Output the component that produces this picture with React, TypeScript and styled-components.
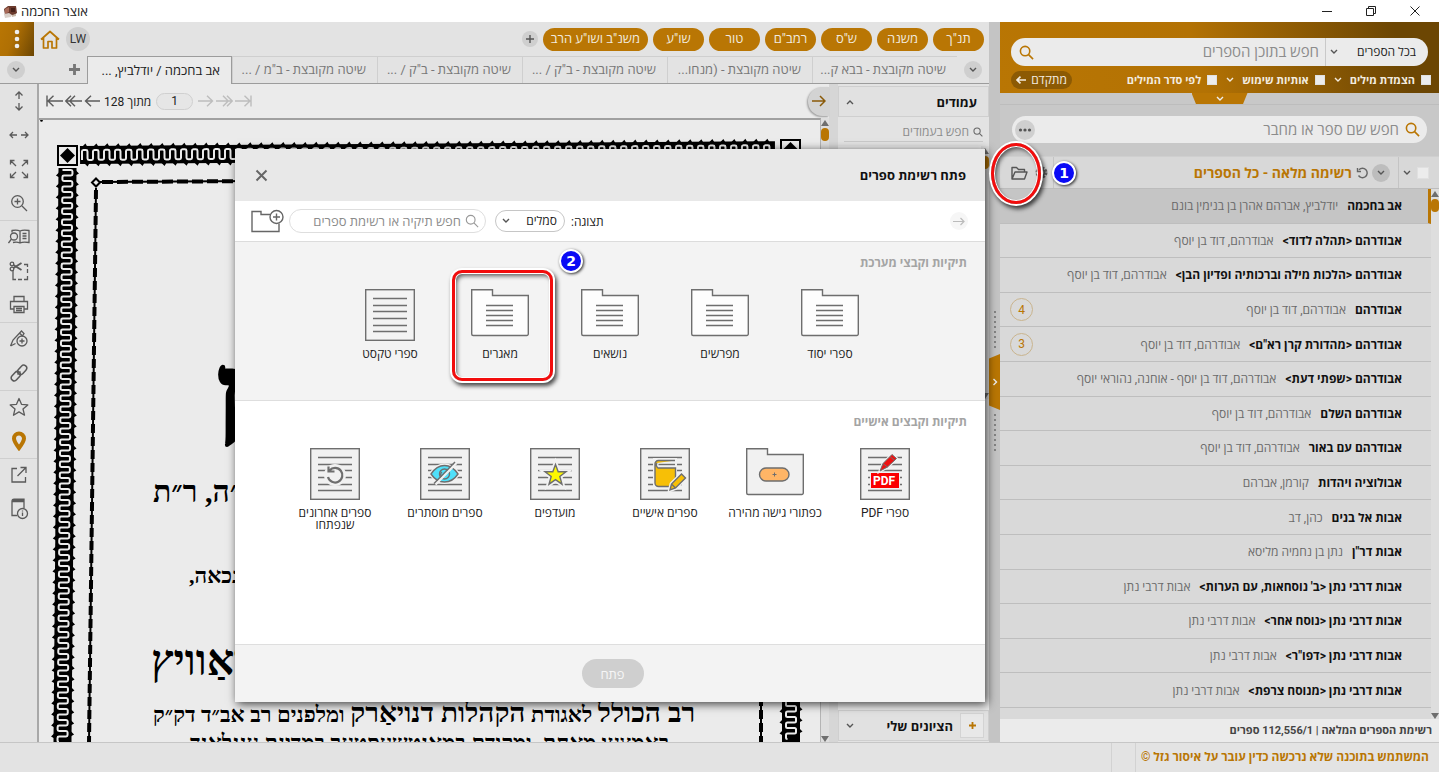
import React from "react";
import styled, { createGlobalStyle, css } from "styled-components";

const ORANGE = "#b97604";
const SANS = 'Roboto, "Open Sans", "Liberation Sans", sans-serif';
const SERIF = '"Liberation Serif", "DejaVu Serif", serif';

const GlobalStyle = createGlobalStyle`
  *, *::before, *::after { box-sizing: border-box; }
  html, body, #root { height: 100%; }
  body { margin: 0; overflow: hidden; font-family: ${SANS}; font-size: 13px; color: #222; background: #e3e3e3; }
  button, input, select { font: inherit; color: inherit; }
  button { padding: 0; border: 0; background: none; cursor: pointer; }
  input::placeholder { color: #8c8c8c; opacity: 1; }
  ul { margin: 0; padding: 0; list-style: none; }
  h1, h2, h3, p { margin: 0; font-size: inherit; font-weight: inherit; }
  svg { display: block; flex: none; }
`;

/* ---------- shell ---------- */

const Shell = styled.div`
  position: relative;
  display: flex;
  flex-direction: column;
  height: 100vh;
  overflow: hidden;
`;

const TitleBar = styled.header`
  display: flex;
  align-items: center;
  gap: 3px;
  height: 22px;
  padding: 0 3px;
  background: #fff;
  direction: ltr;
`;

const WindowTitle = styled.h1`
  flex: 1;
  font: 13px/18px "Open Sans", sans-serif;
  color: #222;
`;

const WindowButton = styled.button`
  display: grid;
  place-items: center;
  width: 44px;
  height: 22px;
`;

const WindowButtons = styled.div`
  display: flex;
  margin-right: -1px;
`;

const Body = styled.div`
  display: flex;
  flex: 1;
  min-height: 0;
`;

const StatusBar = styled.footer`
  display: flex;
  height: 30px;
  border-top: 1px solid #c6c6c6;
  background: #e3e3e3;
`;

const Copyright = styled.p`
  width: 304px;
  padding-right: 10px;
  border-left: 1px solid #d2d2d2;
  font-size: 12px;
  font-weight: 700;
  line-height: 29px;
  white-space: nowrap;
  color: ${ORANGE};
`;

const StatusCell = styled.div`
  width: 24px;
  border-left: 1px solid #d2d2d2;
`;

/* ---------- books panel ---------- */

const BooksPanel = styled.aside`
  display: flex;
  flex-direction: column;
  flex: none;
  width: 439px;
  background: #c8c8c8;
`;

const SearchHeader = styled.div`
  height: 71px;
  padding: 16px 11px 0;
  background: linear-gradient(75deg, #b97604 0%, #b37204 45%, #6c4603 90%);
`;

const SearchBox = styled.div`
  display: flex;
  align-items: center;
  height: 28px;
  padding: 0 12px 0 8px;
  border-radius: 14px;
  background: #ebebeb;
`;

const ScopeSelect = styled.div`
  position: relative;
  width: 91px;
  height: 28px;
  border-left: 1px solid #c9c9c9;

  select {
    width: 100%;
    height: 28px;
    padding: 0;
    border: 0;
    appearance: none;
    background: none;
    font-size: 12px;
  }
  svg { position: absolute; left: 4px; top: 11px; pointer-events: none; }
`;

const BigInput = styled.input`
  flex: 1;
  min-width: 0;
  padding: 0 6px;
  border: 0;
  background: none;
  font-size: 15px;
`;

const OptionsRow = styled.div`
  display: flex;
  align-items: center;
  height: 27px;
  margin-right: -3px;
  color: #f3ece0;
`;

const CheckLabel = styled.label`
  display: flex;
  align-items: center;
  gap: 6px;
  margin-left: 8px;
  font-size: 11px;
  font-weight: 700;
  white-space: nowrap;
`;

const OptionMore = styled.span`
  margin-left: 9px;
`;

const CheckBox = styled.input.attrs({ type: "checkbox" })<{ $size?: number }>`
  flex: none;
  width: ${(p) => p.$size ?? 10}px;
  height: ${(p) => p.$size ?? 10}px;
  margin: 0;
  appearance: none;
  background: #ececec;
  border: 1px solid #e0e0e0;
`;

const AdvancedButton = styled.button`
  display: flex;
  align-items: center;
  justify-content: center;
  gap: 5px;
  width: 61px;
  height: 18px;
  margin-right: auto;
  border-radius: 9px;
  background: #8c5a04;
  font-size: 12px;
`;

const CollapseStrip = styled.div`
  display: flex;
  justify-content: center;
  height: 12px;
  border-bottom: 1px solid #bdbdbd;
`;

const CollapseTab = styled.button`
  display: grid;
  place-items: center;
  width: 56px;
  height: 11px;
  background: ${ORANGE};
  clip-path: polygon(0 0, 100% 0, 92% 100%, 8% 100%);
`;

const NameSearch = styled(SearchBox)`
  height: 27px;
  margin: 11px 12px 13px 12px;
  padding: 0 7px 0 3px;
`;

const RoundButton = styled.button<{ $size: number; $bg?: string }>`
  display: grid;
  flex: none;
  place-items: center;
  width: ${(p) => p.$size}px;
  height: ${(p) => p.$size}px;
  border-radius: 50%;
  background: ${(p) => p.$bg ?? "#cfcfcf"};
`;

const ListHeader = styled.div`
  display: flex;
  align-items: center;
  height: 33px;
  border-top: 1px solid #cfcfcf;
  border-bottom: 1px solid #bcbcbc;
  background: #d8d8d8;
`;

const HeaderSelect = styled.div`
  display: flex;
  align-items: center;
  gap: 6px;
  width: 41px;
  height: 31px;
  padding-right: 10px;
  border-left: 1px solid #c4c4c4;
`;

const HeaderActions = styled.div`
  display: flex;
  align-items: center;
  gap: 4px;
  padding-right: 8px;
`;

const ListTitle = styled.h2`
  flex: 1;
  padding-right: 4px;
  font-size: 14px;
  font-weight: 700;
  color: ${ORANGE};
`;

const HeaderTools = styled.div`
  display: flex;
  align-items: center;
  justify-content: flex-end;
  gap: 7px;
  width: 54px;
  height: 31px;
  padding-left: 11px;
  border-right: 1px solid #c4c4c4;
`;

const ListArea = styled.div`
  display: flex;
  flex: 1;
  min-height: 0;
  background: #d9d9d9;
`;

const BookList = styled.ul`
  display: grid;
  flex: 1;
  grid-auto-rows: 1fr;
  min-width: 0;
  padding-bottom: 11px;
`;

const BookRow = styled.li<{ $selected?: boolean }>`
  display: flex;
  align-items: center;
  gap: 9px;
  min-width: 0;
  padding: 0 29px 0 10px;
  border-bottom: 1px solid #bebebe;
  white-space: nowrap;
  font-size: 12px;
  color: #6a6a6a;
  ${(p) =>
    p.$selected &&
    css`
      padding-right: 26px;
      border-right: 3px solid ${ORANGE};
      background: #c5c5c5;
    `}

  strong { color: #111; font-weight: 700; }
`;

const CountBadge = styled.span`
  display: grid;
  place-items: center;
  width: 23px;
  height: 23px;
  margin-right: auto;
  border: 1px solid #c9b48e;
  border-radius: 50%;
  color: ${ORANGE};
`;

const ListSummary = styled.p`
  height: 23px;
  padding-right: 7px;
  background: #ebebeb;
  font-size: 11px;
  font-weight: 700;
  line-height: 23px;
  color: #444;
`;

/* ---------- scroll bars and splitter ---------- */

const ScrollTrack = styled.div`
  display: flex;
  flex-direction: column;
  align-items: center;
  flex: none;
  gap: 2px;
  width: 8px;
  padding-top: 2px;
  background: #dedede;
`;

const Thumb = styled.span`
  width: 8px;
  height: 13px;
  border-radius: 4px;
  background: ${ORANGE};
`;

const ArrowHead = styled.span<{ $down?: boolean }>`
  width: 0;
  height: 0;
  border: 4px solid transparent;
  border-top: ${(p) => (p.$down ? "6px solid #6e6e6e" : "0")};
  border-bottom: ${(p) => (p.$down ? "0" : "6px solid #6e6e6e")};
  margin-top: ${(p) => (p.$down ? "auto" : "0")};
`;

const Splitter = styled.div`
  display: flex;
  flex-direction: column;
  align-items: center;
  justify-content: center;
  gap: 4px;
  flex: none;
  width: 11px;
  background: #c4c4c4;
`;

const Dots = styled.span`
  width: 2px;
  height: 39px;
  background: repeating-linear-gradient(#848484 0 2px, transparent 2px 5px);
`;

const SplitHandle = styled.button`
  display: grid;
  place-items: center;
  width: 11px;
  height: 56px;
  background: ${ORANGE};
  clip-path: polygon(0 8%, 100% 0, 100% 100%, 0 92%);
`;

/* ---------- workspace ---------- */

const Workspace = styled.main`
  display: flex;
  flex: 1;
  flex-direction: column;
  min-width: 0;
  background: #e3e3e3;
`;

const QuickBar = styled.nav`
  display: flex;
  align-items: center;
  gap: 5px;
  height: 34px;
  padding-right: 5px;
`;

const Pill = styled.button`
  min-width: 51px;
  height: 23px;
  padding: 0 8px;
  border-radius: 12px;
  background: ${ORANGE};
  color: #f1eadf;
  font-size: 13px;
  line-height: 20px;
  white-space: nowrap;
`;

const QuickEnd = styled.div`
  display: flex;
  align-items: center;
  gap: 6px;
  margin-right: auto;
`;

const MenuButton = styled.button`
  display: grid;
  place-items: center;
  width: 34px;
  height: 34px;
  background: linear-gradient(110deg, #b97604, #b07004 40%, #6c4603);
`;

const Avatar = styled(RoundButton)`
  font-size: 12px;
  color: #333;
`;

const TabBar = styled.div`
  display: flex;
  align-items: center;
  height: 28px;
  padding-right: 7px;
  border-bottom: 1px solid #9c9c9c;
`;

const Tabs = styled.div`
  display: flex;
  align-self: stretch;
  margin-right: 7px;
`;

const Tab = styled.button<{ $active?: boolean }>`
  width: 145px;
  height: 27px;
  padding: 0 11px;
  border-top: 1px solid #cfcfcf;
  border-left: 1px solid #cfcfcf;
  overflow: hidden;
  color: #777;
  font-size: 13px;
  line-height: 26px;
  text-align: right;
  white-space: nowrap;
  ${(p) =>
    p.$active &&
    css`
      height: 28px;
      border: 1px solid #9c9c9c;
      border-bottom: 0;
      background: #ebebeb;
      color: #222;
    `}
`;

const TabPlus = styled.button`
  margin-right: 7px;
`;

const TabEnd = styled.div`
  margin: 0 auto 0 7px;
`;

const Content = styled.div`
  display: flex;
  flex: 1;
  min-height: 0;
`;

const PagesPanel = styled.section`
  display: flex;
  flex-direction: column;
  flex: none;
  width: 160px;
  padding: 2px 0 1px;
  border-left: 9px solid #d6d6d6;
`;

const PanelHeader = styled.div<{ $pad: number }>`
  display: flex;
  align-items: center;
  justify-content: space-between;
  flex: none;
  height: 31px;
  padding: 0 ${(p) => p.$pad}px 0 7px;
  border: 1px solid #cfcfcf;
  background: #e1e1e1;
  font-size: 13px;
  font-weight: 700;
  color: #111;
`;

const PageSearch = styled.label`
  display: flex;
  align-items: center;
  gap: 4px;
  flex: none;
  height: 25px;
  margin: 0 6px;
  padding-top: 5px;
  border-bottom: 1px solid #c9c9c9;

  input {
    width: 110px;
    padding: 0;
    border: 0;
    background: none;
    font-size: 12px;
  }
`;

const PagesArea = styled.div`
  display: flex;
  flex: none;
  height: 253px;
  margin-top: 4px;
  background: #ebebeb;
`;

const MarksAdd = styled.button`
  display: grid;
  place-items: center;
  width: 24px;
  height: 25px;
  border: 1px solid #d3d3d3;
  background: #e8e8e8;
`;

const MarksTitle = styled.h3`
  flex: 1;
  padding-right: 7px;
`;

const MarksSpace = styled.div`
  flex: 1;
  background: #e8e8e8;
`;

const Viewer = styled.section`
  display: flex;
  flex: 1;
  flex-direction: column;
  min-width: 0;
  background: #ebebeb;
`;

const PageBar = styled.div`
  display: flex;
  align-items: center;
  gap: 4px;
  height: 34px;
  padding-left: 7px;
  direction: ltr;
`;

const NavButton = styled.button<{ $muted?: boolean }>`
  display: grid;
  place-items: center;
  width: 15px;
  height: 20px;
  color: ${(p) => (p.$muted ? "#bdbdbd" : "#5c5c5c")};
`;

const PageCount = styled.span`
  margin: 0 1px;
  font-size: 12px;
  direction: rtl;
`;

const PageInput = styled.input`
  width: 37px;
  height: 17px;
  padding: 0;
  border: 1px solid #d0d0d0;
  border-radius: 9px;
  background: #e6e6e6;
  font-size: 12px;
  text-align: center;
`;

const SideToggle = styled.button`
  display: grid;
  place-items: center;
  width: 21px;
  height: 29px;
  margin-left: auto;
  border-radius: 15px 0 0 15px;
  background: #d3d3d3;
  box-shadow: -1px 1px 2px #9d9d9d;
`;

const PageView = styled.div`
  display: flex;
  flex: 1;
  min-height: 0;
`;

const PageSheet = styled.div`
  flex: 1;
  min-width: 0;
  overflow: hidden;
  border-top: 2px solid #a0a0a0;
  border-right: 1px solid #b4b4b4;
  direction: ltr;
`;

const ToolRail = styled.nav`
  display: flex;
  flex-direction: column;
  flex: none;
  width: 39px;
  border-right: 2px solid #a8a8a8;
  background: #e3e3e3;
`;

const ToolGroup = styled.div`
  margin-bottom: -1px;
  border-bottom: 1px solid #cfcfcf;
  &:last-child { border-bottom: 0; }
`;

const ToolButton = styled.button`
  display: grid;
  place-items: center;
  width: 37px;
  height: 34px;
  color: #5a5a5a;
`;

/* ---------- dialog ---------- */

const Dialog = styled.section`
  position: absolute;
  left: 235px;
  top: 149px;
  display: flex;
  flex-direction: column;
  width: 750px;
  background: #fff;
  box-shadow: 2px 2px 9px rgba(0, 0, 0, 0.75);
`;

const DialogHeader = styled.header`
  display: flex;
  align-items: center;
  justify-content: space-between;
  height: 52px;
  padding: 0 19px 0 20px;
  background: #e8e8e8;
  color: #111;

  h2 { font-size: 13px; font-weight: 700; }
`;

const DialogTools = styled.div`
  display: flex;
  align-items: center;
  height: 41px;
  padding: 0 17px 0 16px;
  border-bottom: 1px solid #dcdcdc;
`;

const ViewLabel = styled.label`
  display: flex;
  align-items: center;
  gap: 6px;
  margin-right: auto;
  font-size: 12px;
`;

const ViewSelect = styled.span`
  position: relative;

  select {
    width: 70px;
    height: 22px;
    padding: 0 7px;
    border: 1px solid #c6c6c6;
    border-radius: 11px;
    appearance: none;
    background: #fff;
    font-size: 12px;
  }
  svg { position: absolute; left: 7px; top: 8px; pointer-events: none; }
`;

const FolderSearch = styled.label`
  display: flex;
  align-items: center;
  gap: 4px;
  width: 197px;
  height: 24px;
  margin: 0 9px 0 5px;
  padding: 0 6px;
  border: 1px solid #dedede;
  border-radius: 12px;

  input {
    flex: 1;
    min-width: 0;
    padding: 0;
    border: 0;
    background: none;
    font-size: 13px;
  }
`;

const DialogSection = styled.section<{ $bg: string; $height: number }>`
  min-height: ${(p) => p.$height}px;
  padding: 14px 18px;
  background: ${(p) => p.$bg};
  border-bottom: 1px solid #dedede;

  h3 {
    margin-bottom: 19px;
    font-size: 12px;
    font-weight: 700;
    line-height: 14px;
    color: #a4a4a4;
  }
`;

const TileRow = styled.div`
  display: flex;
  justify-content: center;
`;

const Tile = styled.button`
  display: flex;
  flex-direction: column;
  align-items: center;
  gap: 7px;
  width: 110px;
  font-size: 12px;
  line-height: 12px;
`;

const TileIcon = styled.span`
  height: 52px;
`;

const TileLabel = styled.span`
  max-width: 100px;
`;

const DialogFooter = styled.footer`
  display: flex;
  justify-content: center;
  padding: 14px 0;
  background: #f3f3f3;
  direction: ltr;
`;

const OpenButton = styled.button`
  width: 62px;
  height: 29px;
  margin-left: 5px;
  border-radius: 15px;
  background: #cfcfcf;
  color: #f6f6f6;
  font-size: 13px;
`;

/* ---------- tutorial marks over the window ---------- */

const Mark = styled.div<{ $x: number; $y: number; $w: number; $h: number; $round: string }>`
  position: absolute;
  left: ${(p) => p.$x}px;
  top: ${(p) => p.$y}px;
  width: ${(p) => p.$w}px;
  height: ${(p) => p.$h}px;
  border: 3px solid #f20d0d;
  border-radius: ${(p) => p.$round};
  box-shadow: 0 0 0 2px #fff, 2px 3px 4px 2px rgba(0, 0, 0, 0.7), inset 0 0 0 1px #fff,
    inset 2px 3px 4px rgba(0, 0, 0, 0.6);
  pointer-events: none;
`;

const StepBadge = styled.span<{ $x: number; $y: number }>`
  position: absolute;
  left: ${(p) => p.$x}px;
  top: ${(p) => p.$y}px;
  display: grid;
  place-items: center;
  width: 24px;
  height: 24px;
  border: 2px solid #fff;
  border-radius: 50%;
  background: #0a0af5;
  box-shadow: 1px 1px 3px rgba(0, 0, 0, 0.8);
  color: #fff;
  font: 700 14px/20px "DejaVu Sans", sans-serif;
`;

/* ---------- icons ---------- */

type IconProps = {
  w?: number;
  h?: number;
  box?: string;
  color?: string;
  sw?: number;
  children: React.ReactNode;
};

const Icon = ({ w = 20, h = w, box = `0 0 ${w} ${h}`, color = "currentColor", sw = 1.3, children }: IconProps) => (
  <svg width={w} height={h} viewBox={box} fill="none" stroke={color} strokeWidth={sw} aria-hidden="true">
    {children}
  </svg>
);

const Chevron = ({ dir = "down", color = "#555" }: { dir?: "down" | "up"; color?: string }) => (
  <Icon w={8} h={6} color={color} sw={1.4}>
    <path d={dir === "down" ? "M1 1l3 3 3-3" : "M1 5l3-3 3 3"} />
  </Icon>
);

const Magnifier = ({ size = 16, color = ORANGE, sw = 1.7 }: { size?: number; color?: string; sw?: number }) => (
  <Icon w={size} box="0 0 16 16" color={color} sw={sw}>
    <circle cx="6.500" cy="6.500" r="5" />
    <path d="M10.200 10.200L15 15" />
  </Icon>
);

const Plus = ({ size, color, sw }: { size: number; color: string; sw: number }) => (
  <Icon w={size} box="0 0 10 10" color={color} sw={sw}>
    <path d="M5 0v10M0 5h10" />
  </Icon>
);

const Arrow = ({ d, color }: { d: string; color?: string }) => (
  <Icon w={17} h={12} color={color} sw={1.4}>
    <path d={d} />
  </Icon>
);

const LEFT = "M16 6H1.5M7 .8L1.5 6 7 11.2";
const RIGHT = "M1 6h14.5M10 .8L15.5 6 10 11.2";
const LEFT_ALL = "M17 6H2M7.500 .8L2 6l5.500 5.200M1 .5v11";
const LEFT_TWO = "M17 6H1M6 .8L.8 6 6 11.2M10 .8L4.800 6 10 11.2";
const RIGHT_TWO = "M0 6h16M11 .8L16.200 6 11 11.200M7 .8L12.200 6 7 11.200";
const RIGHT_ALL = "M0 6h15M9.500 .8L15 6 9.500 11.200M16 .5v11";

const AppLogo = () => (
  <svg width="15" height="15" viewBox="0 0 15 15" aria-hidden="true">
    <path d="M1 5l4-3 8 0 1 7-3 2-9 0z" fill="#6b3a2c" />
    <path d="M2 5l4-2v5l-4 2z" fill="#a86a58" />
    <path d="M1 10l5-1 3 2-1 2-6 1z" fill="#d9cfc8" />
    <path d="M8 4h4v4H8z" fill="#47211a" />
    <path d="M9 11l4-1v2l-4 1z" fill="#c9b9a8" />
  </svg>
);

const Rail = {
  fitHeight: (
    <Icon w={20}>
      <path d="M10 1v7M6.500 4.500L10 1l3.500 3.500M10 12v7M6.500 15.500L10 19l3.500-3.500" />
    </Icon>
  ),
  fitWidth: (
    <Icon w={20}>
      <path d="M1 10h7M4 7l-3 3 3 3M12 10h7M16 7l3 3-3 3" />
    </Icon>
  ),
  full: (
    <Icon w={20}>
      <path d="M7 7L1.500 1.500M1.500 5.500v-4h4M13 7l5.500-5.500M14.500 1.500h4v4M7 13l-5.500 5.500M1.500 14.500v4h4M13 13l5.500 5.500M18.500 14.500v4h-4" />
    </Icon>
  ),
  zoom: (
    <Icon w={18}>
      <circle cx="7.500" cy="7.500" r="5.800" />
      <path d="M12 12l5 5M7.500 4.500v6M4.500 7.500h6" />
    </Icon>
  ),
  book: (
    <Icon w={22} h={18}>
      <path d="M12 3v12M12 3C10 2 7 2 4 2.500v2M12 3c2-1 6-1 9-.5v12c-3-.5-7-.5-9 .5-2-1-5-1-7-.5M14.500 5.500h4M14.500 8h4M14.500 10.500h4" />
      <circle cx="6" cy="8.500" r="3.500" />
      <path d="M3.500 11L.5 15" />
    </Icon>
  ),
  cut: (
    <Icon w={20}>
      <path d="M4 9v9.500h3M9 18.500h4M15 18.500h3.500V15M18.500 12V8M18.500 6V3.500H15" />
      <circle cx="3" cy="3" r="1.800" />
      <circle cx="3" cy="8" r="1.800" />
      <path d="M4.500 4l8 5M4.500 7l8-5" strokeWidth="1.800" />
    </Icon>
  ),
  print: (
    <Icon w={20}>
      <path d="M5 6V1.500h10V6M5 14H1.500V6.500h17V14H15M5 11.500h10v6H5zM7 13.500h6M7 15.500h6" />
    </Icon>
  ),
  pen: (
    <Icon w={20}>
      <path d="M1.500 17L4 11l8.500-9 2.500 2.500-2 3M1.500 17l5-2.500M10.500 4l2.500 2.500" />
      <circle cx="13" cy="12" r="5" />
      <path d="M13 9.500v5M10.500 12h5" />
    </Icon>
  ),
  link: (
    <Icon w={20} sw={1.5}>
      <rect x="8" y="4" width="10.500" height="6" rx="3" transform="rotate(-48 13 7)" />
      <rect x="1.500" y="10" width="10.500" height="6" rx="3" transform="rotate(-48 7 13)" />
      <path d="M8.500 11.500l3-3" />
    </Icon>
  ),
  star: (
    <Icon w={20}>
      <path d="M10 1.500l2.500 5.800 6.300.6-4.800 4.100 1.500 6.200-5.500-3.300-5.500 3.300L6 12 1.200 7.900l6.300-.6z" strokeLinejoin="round" />
    </Icon>
  ),
  pin: (
    <Icon w={16} h={20} color={ORANGE} sw={4}>
      <path d="M8 17C5 13 3 10 3 7.500a5 5 0 0 1 10 0C13 10 11 13 8 17z" />
    </Icon>
  ),
  export: (
    <Icon w={18}>
      <path d="M7 2.500H2v13.500h13.500V11M10.500 1.500h5.500V7M16 1.500L7.500 10" />
    </Icon>
  ),
  docInfo: (
    <Icon w={20} h={22}>
      <path d="M8 17.500H3V3.500h12V10M3 3.500C3 1.500 4 1.200 5 1.200h10v2.300M4 2.400h11" />
      <circle cx="13.500" cy="15.500" r="5" />
      <path d="M13.500 14.500V18M13.500 12.500v1" />
    </Icon>
  ),
};

const FILE_LINES = [9, 16, 22, 29, 36, 42];

const FileArt = ({ fill = "#f1f1f1", children }: { fill?: string; children?: React.ReactNode }) => (
  <svg width="50" height="52" viewBox="0 0 50 52" fill="none" stroke="#6e6e6e" strokeWidth="1.400" aria-hidden="true">
    <rect x=".7" y=".7" width="48.600" height="50.600" fill={fill} />
    {FILE_LINES.map((y) => (
      <path key={y} d={`M8 ${y}.500h34`} />
    ))}
    {children}
  </svg>
);

const FolderArt = ({ fill = "#fdfdfd", children }: { fill?: string; children?: React.ReactNode }) => (
  <svg width="58" height="48" viewBox="0 0 58 48" fill="none" stroke="#6e6e6e" strokeWidth="1.400" aria-hidden="true">
    <path d="M.7.700H21.500V6.500H57.300V45a1.500 1.500 0 0 1-1.500 1.500H2.200A1.500 1.500 0 0 1 .7 45z" fill={fill} />
    {children ?? <path d="M15 16.500h27M15 21.500h27M15 26.500h27M15 31.500h27M15 36.500h27" />}
  </svg>
);

const PdfArt = () => (
  <FileArt>
    <path d="M10 24h30v17H10z" fill="#f1f1f1" stroke="none" />
    <path d="M11 25h28v15H11z" fill="#fb0000" stroke="none" />
    <path d="M20 23l3-7.500L32 6.500l4.500 4L27.500 19z" fill="#ee1111" stroke="#f1f1f1" strokeWidth="3" />
    <path d="M20 23l3-7.500L32 6.500l4.500 4L27.500 19zM23 15.500l4.500 3.500M30 8.500l4.500 4" fill="#ee1111" strokeWidth="1" />
    <text
      x="24"
      y="37"
      fill="#fff"
      stroke="none"
      direction="ltr"
      textAnchor="middle"
      fontFamily="Roboto, sans-serif"
      fontWeight="700"
      fontSize="12"
    >
      PDF
    </text>
  </FileArt>
);

const QuickArt = () => (
  <FolderArt fill="#f1f1f1">
    <rect x="13.500" y="20" width="29.500" height="13" rx="6.500" fill="#ffb566" />
    <path d="M26.500 26.500h4M28.500 24.500v4" strokeWidth="1" />
  </FolderArt>
);

const PersonalArt = () => (
  <FileArt>
    <path d="M13 10h24v31H13z" fill="#f1f1f1" stroke="none" />
    <path d="M35 12.500H18.500a3.500 3.500 0 0 0-3.500 4V35a3.500 3.500 0 0 0 3.500 3.500H32l3.500-4V20H18a3.500 3.500 0 0 1-1-5" fill="#f7bf06" />
    <path d="M18.500 16.500H35" />
    <path d="M30 42l1.500-6L41.500 26l4 4-10 10z" fill="#f7bf06" stroke="#f1f1f1" strokeWidth="4" />
    <path d="M30 42l1.500-6L41.500 26l4 4-10 10zM31.500 36l4 4" fill="#f7bf06" />
  </FileArt>
);

const FavouriteArt = () => {
  const star = "M25.500 16.500l2.700 7.200h7.800l-6.200 4.800 2.200 7.700-6.500-4.500-6.500 4.500 2.200-7.700-6.200-4.800h7.800z";
  return (
    <FileArt>
      <path d={star} stroke="#f1f1f1" strokeWidth="5" />
      <path d={star} fill="#fdf800" />
    </FileArt>
  );
};

const HiddenArt = () => {
  const eye = "M11 26c4-6 9-8.500 13.500-8.500S34 20 38 26c-4 6-9 8-13.500 8S15 32 11 26z";
  return (
    <FileArt>
      <path d={eye} stroke="#f1f1f1" strokeWidth="4" />
      <path d={eye} fill="#4fe0fa" />
      <circle cx="24.500" cy="26" r="5" />
      <path d="M22 29a3 3 0 0 1 0-5" />
      <path d="M15.500 36.500L36.500 15" stroke="#f1f1f1" strokeWidth="2.500" />
      <path d="M14 35.500L35 14" />
    </FileArt>
  );
};

const RecentArt = () => (
  <FileArt>
    <circle cx="25" cy="27" r="11" fill="#f1f1f1" stroke="none" />
    <path d="M19.500 22.500A7.300 7.300 0 1 1 18 29M18.500 18.500v5h6" strokeWidth="2.200" />
  </FileArt>
);

const UndoIcon = () => (
  <Icon w={12} color="#666" sw={1.4}>
    <path d="M3 2.800A4.700 4.700 0 1 1 2.500 8.500M1.500 1v3.500H5" />
  </Icon>
);

/* ---------- scanned title page ---------- */

/* A band of the woodcut frame running along +x, centred on y = 0. */
const FrameBand = ({ length, transform }: { length: number; transform: string }) => {
  const step = 11;
  const n = Math.floor(length / step);
  let meander = "M2 5";
  let teeth = "";
  for (let i = 0; i < n; i++) {
    const x = i * step + 2;
    meander += `V-3.500Q${x} -5 ${x + 1.5} -5H${x + 4}Q${x + 5.5} -5 ${x + 5.5} -3.500V3.500Q${x + 5.5} 5 ${x + 7} 5H${x + 9.5}Q${x + 11} 5 ${x + 11} 3.500`;
    teeth += `M${x} -8l3.500 -3.500l2 3.500zM${x + 2} 8l3.500 3.500l2 -3.500z`;
  }
  return (
    <g transform={transform}>
      <rect x="0" y="-9" width={length} height="18" fill="#000" />
      <path d={meander} fill="none" stroke="#ebebeb" strokeWidth="2" />
      <path d={teeth} fill="#000" />
    </g>
  );
};

const Corner = ({ x, y }: { x: number; y: number }) => (
  <g transform={`translate(${x} ${y})`}>
    <rect x="1" y="1" width="19" height="19" fill="#ebebeb" stroke="#000" strokeWidth="2" />
    <path d="M10.500 3l7.500 7.500-7.500 7.500L3 10.500z" />
  </g>
);

const ScannedPage = () => (
  <svg width="783" height="623" viewBox="39 120 783 623" role="img" aria-label="שער הספר אב בחכמה">
    <circle cx="41.500" cy="120.500" r="1.300" />
    <Corner x={57} y={145} />
    <Corner x={780} y={139} />
    <FrameBand length={695} transform="translate(80 155) rotate(-.4)" />
    <FrameBand length={580} transform="translate(67.500 168) rotate(90.500)" />
    <FrameBand length={580} transform="translate(791 165) rotate(90)" />
    <g stroke="#000" fill="none">
      <path d="M96 182L760 178" strokeWidth="2" />
      <path d="M102 182L760 178" strokeWidth="4" strokeDasharray="11 4" />
      <path d="M96 188L89 743M761 188V743" strokeWidth="2" />
      <path d="M96 190L89 743M761 190V743" strokeWidth="4" strokeDasharray="9 4" />
      <path d="M96 178.500l4 4-4 4-4-4z" fill="#ebebeb" strokeWidth="2" />
    </g>
    <g fontFamily={SERIF} fontWeight="700" textAnchor="end" direction="rtl">
      <text x="217" y="425" fontSize="100" stroke="#000" strokeWidth="3">ן</text>
      <text x="153" y="502" fontSize="30">זצללה״ה, ר״ת</text>
      <text x="189" y="583" fontSize="22">נכאה,</text>
      <text x="151" y="675" fontSize="43">ראַוויץ</text>
      <text x="153" y="722" fontSize="22">
        <tspan fontSize="28">רב הכולל</tspan> לאגודת <tspan fontSize="28">הקהלות דנויאַרק</tspan> ומלפנים רב אב״ד דק״ק
      </text>
      <text x="190" y="750" fontSize="22">באמצעו מאחת, ומקודם במאנטשעסטער במדינת ענגלאנד</text>
    </g>
  </svg>
);

/* ---------- data ---------- */

const QUICK = ['תנ"ך', "משנה", 'ש"ס', 'רמב"ם', "טור", 'שו"ע', 'משנ"ב ושו"ע הרב'];

const TABS = [
  "שיטה מקובצת - בבא ק...",
  "שיטה מקובצת - (מנחו...",
  'שיטה מקובצת - ב"ק / ...',
  'שיטה מקובצת - ב"ק / ...',
  'שיטה מקובצת - ב"מ / ...',
  "אב בחכמה / יודלביץ, ...",
];

const BOOKS: { title: string; author: string; count?: number }[] = [
  { title: "אב בחכמה", author: "יודלביץ, אברהם אהרן בן בנימין בונם" },
  { title: "אבודרהם <תהלה לדוד>", author: "אבודרהם, דוד בן יוסף" },
  { title: "אבודרהם <הלכות מילה וברכותיה ופדיון הבן>", author: "אבודרהם, דוד בן יוסף" },
  { title: "אבודרהם", author: "אבודרהם, דוד בן יוסף", count: 4 },
  { title: 'אבודרהם <מהדורת קרן רא"ם>', author: "אבודרהם, דוד בן יוסף", count: 3 },
  { title: "אבודרהם <שפתי דעת>", author: "אבודרהם, דוד בן יוסף - אוחנה, נהוראי יוסף" },
  { title: "אבודרהם השלם", author: "אבודרהם, דוד בן יוסף" },
  { title: "אבודרהם עם באור", author: "אבודרהם, דוד בן יוסף" },
  { title: "אבולוציה ויהדות", author: "קורמן, אברהם" },
  { title: "אבות אל בנים", author: "כהן, דב" },
  { title: 'אבות דר"ן', author: "נתן בן נחמיה מליסא" },
  { title: "אבות דרבי נתן <ב' נוסחאות, עם הערות>", author: "אבות דרבי נתן" },
  { title: "אבות דרבי נתן <נוסח אחר>", author: "אבות דרבי נתן" },
  { title: 'אבות דרבי נתן <דפו"ר>', author: "אבות דרבי נתן" },
  { title: "אבות דרבי נתן <מנוסח צרפת>", author: "אבות דרבי נתן" },
];

const SYSTEM_TILES = [
  { label: "ספרי יסוד", art: <FolderArt /> },
  { label: "מפרשים", art: <FolderArt /> },
  { label: "נושאים", art: <FolderArt /> },
  { label: "מאגרים", art: <FolderArt /> },
  { label: "ספרי טקסט", art: <FileArt fill="#f3f3f3" /> },
];

const PERSONAL_TILES = [
  { label: "ספרי PDF", art: <PdfArt /> },
  { label: "כפתורי גישה מהירה", art: <QuickArt /> },
  { label: "ספרים אישיים", art: <PersonalArt /> },
  { label: "מועדפים", art: <FavouriteArt /> },
  { label: "ספרים מוסתרים", art: <HiddenArt /> },
  { label: "ספרים אחרונים שנפתחו", art: <RecentArt /> },
];

const TOOL_GROUPS: { name: string; icon: React.ReactNode }[][] = [
  [
    { name: "התאם לגובה", icon: Rail.fitHeight },
    { name: "התאם לרוחב", icon: Rail.fitWidth },
    { name: "מסך מלא", icon: Rail.full },
    { name: "הגדלה", icon: Rail.zoom },
  ],
  [
    { name: "חיפוש בספר", icon: Rail.book },
    { name: "גזירה", icon: Rail.cut },
    { name: "הדפסה", icon: Rail.print },
  ],
  [
    { name: "הערה", icon: Rail.pen },
    { name: "קישור", icon: Rail.link },
  ],
  [
    { name: "מועדפים", icon: Rail.star },
    { name: "ציון", icon: Rail.pin },
  ],
  [
    { name: "חלון חדש", icon: Rail.export },
    { name: "פרטי הספר", icon: Rail.docInfo },
  ],
];

/* ---------- parts ---------- */

const Books = () => (
  <BooksPanel>
    <SearchHeader>
      <SearchBox>
        <ScopeSelect>
          <select aria-label="היקף החיפוש">
            <option>בכל הספרים</option>
          </select>
          <Chevron />
        </ScopeSelect>
        <BigInput aria-label="חיפוש בתוכן" placeholder="חפש בתוכן הספרים" />
        <Magnifier size={15} />
      </SearchBox>
      <OptionsRow>
        <CheckLabel>
          <CheckBox />
          הצמדת מילים
        </CheckLabel>
        <OptionMore><Chevron color="#f3ece0" /></OptionMore>
        <CheckLabel>
          <CheckBox />
          אותיות שימוש
        </CheckLabel>
        <OptionMore><Chevron color="#f3ece0" /></OptionMore>
        <CheckLabel>
          <CheckBox />
          לפי סדר המילים
        </CheckLabel>
        <AdvancedButton>
          מתקדם
          <Icon w={10} h={8} sw={1.6}>
            <path d="M10 4H1M4.500 .7L1 4l3.500 3.300" />
          </Icon>
        </AdvancedButton>
      </OptionsRow>
    </SearchHeader>
    <CollapseStrip>
      <CollapseTab aria-label="הרחב">
        <Chevron color="#eee" />
      </CollapseTab>
    </CollapseStrip>
    <NameSearch>
      <Magnifier size={15} />
      <BigInput aria-label="חיפוש ספר" placeholder="חפש שם ספר או מחבר" />
      <RoundButton $size={20} aria-label="עוד">
        <Icon w={14} h={4} color="none">
          <g fill="#555">
            <circle cx="2.500" cy="2" r="1.600" />
            <circle cx="7" cy="2" r="1.600" />
            <circle cx="11.500" cy="2" r="1.600" />
          </g>
        </Icon>
      </RoundButton>
    </NameSearch>
    <ListHeader>
      <HeaderSelect>
        <CheckBox $size={12} aria-label="בחר הכל" />
        <Chevron />
      </HeaderSelect>
      <HeaderActions>
        <RoundButton $size={18} $bg="#bdbdbd" aria-label="רשימות">
          <Chevron />
        </RoundButton>
        <UndoIcon />
      </HeaderActions>
      <ListTitle>רשימה מלאה - כל הספרים</ListTitle>
      <HeaderTools>
        <button aria-label="הגדרות">
          <Icon w={13} color="#666" sw={1.5}>
            <circle cx="6.500" cy="6.500" r="4.500" strokeDasharray="2.300 1.200" strokeWidth="3" />
            <circle cx="6.500" cy="6.500" r="3" />
          </Icon>
        </button>
        <button aria-label="פתח רשימה">
          <Icon w={17} h={14} color="#555" sw={1.4}>
            <path d="M1 13V1.500h4.500L7.500 3.500h6V6M1 13L4 6h12l-2.500 7z" strokeLinejoin="round" />
          </Icon>
        </button>
      </HeaderTools>
    </ListHeader>
    <ListArea>
      <ScrollTrack>
        <ArrowHead />
        <Thumb />
        <ArrowHead $down />
      </ScrollTrack>
      <BookList>
        {BOOKS.map((b, i) => (
          <BookRow key={b.title} $selected={i === 0}>
            <strong>{b.title}</strong>
            <span>{b.author}</span>
            {b.count && <CountBadge>{b.count}</CountBadge>}
          </BookRow>
        ))}
      </BookList>
    </ListArea>
    <ListSummary>רשימת הספרים המלאה | 112,556/1 ספרים</ListSummary>
  </BooksPanel>
);

const Pages = () => (
  <PagesPanel>
    <PanelHeader $pad={11}>
      <h3>עמודים</h3>
      <Chevron dir="up" />
    </PanelHeader>
    <PageSearch>
      <Magnifier size={10} color="#666" />
      <input aria-label="חיפוש בעמודים" placeholder="חפש בעמודים" />
    </PageSearch>
    <PagesArea>
      <ScrollTrack>
        <ArrowHead />
        <Thumb />
        <ArrowHead $down />
      </ScrollTrack>
    </PagesArea>
    <MarksSpace />
    <PanelHeader $pad={4}>
      <MarksAdd aria-label="הוסף ציון">
        <Plus size={7} color={ORANGE} sw={2.6} />
      </MarksAdd>
      <MarksTitle>הציונים שלי</MarksTitle>
      <Chevron />
    </PanelHeader>
  </PagesPanel>
);

const PageToolbar = () => (
  <PageBar>
    <NavButton aria-label="לסוף"><Arrow d={LEFT_ALL} /></NavButton>
    <NavButton aria-label="קפיצה קדימה"><Arrow d={LEFT_TWO} /></NavButton>
    <NavButton aria-label="הבא"><Arrow d={LEFT} /></NavButton>
    <PageCount>מתוך 128</PageCount>
    <PageInput aria-label="עמוד" defaultValue="1" />
    <NavButton $muted aria-label="הקודם"><Arrow d={RIGHT} /></NavButton>
    <NavButton $muted aria-label="קפיצה אחורה"><Arrow d={RIGHT_TWO} /></NavButton>
    <NavButton $muted aria-label="להתחלה"><Arrow d={RIGHT_ALL} /></NavButton>
    <SideToggle aria-label="הצג לוח">
      <Icon w={15} h={12} color="#8a5a08" sw={1.5}>
        <path d="M1 6h13M9 1l5 5-5 5" />
      </Icon>
    </SideToggle>
  </PageBar>
);

const OpenListDialog = () => (
  <Dialog role="dialog" aria-label="פתח רשימת ספרים">
    <DialogHeader>
      <h2>פתח רשימת ספרים</h2>
      <button aria-label="סגור">
        <Icon w={13} color="#666" sw={2}>
          <path d="M1.500 1.500l10 10M11.500 1.500l-10 10" />
        </Icon>
      </button>
    </DialogHeader>
    <DialogTools>
      <RoundButton $size={18} $bg="#f6f6f6" aria-label="חזרה">
        <Icon w={12} h={9} color="#bbb" sw={1.2}>
          <path d="M0 4.500h11M7.500 1L11 4.500 7.500 8" />
        </Icon>
      </RoundButton>
      <ViewLabel>
        תצוגה:
        <ViewSelect>
          <select>
            <option>סמלים</option>
          </select>
          <Chevron />
        </ViewSelect>
      </ViewLabel>
      <FolderSearch>
        <Magnifier size={14} color="#999" sw={1.3} />
        <input aria-label="חיפוש תיקיה" placeholder="חפש תיקיה או רשימת ספרים" />
      </FolderSearch>
      <button aria-label="תיקיה חדשה">
        <Icon w={33} h={24} color="#666" sw={1.4}>
          <path d="M19 5.500h-9V2.500H1v20h27v-8" />
          <circle cx="25.500" cy="8" r="6.500" />
          <path d="M25.500 4.500v7M22 8h7" />
        </Icon>
      </button>
    </DialogTools>
    <DialogSection $bg="#f3f3f3" $height={159}>
      <h3>תיקיות וקבצי מערכת</h3>
      <TileRow>
        {SYSTEM_TILES.map((t) => (
          <Tile key={t.label}>
            <TileIcon>{t.art}</TileIcon>
            <TileLabel>{t.label}</TileLabel>
          </Tile>
        ))}
      </TileRow>
    </DialogSection>
    <DialogSection $bg="#fff" $height={244}>
      <h3>תיקיות וקבצים אישיים</h3>
      <TileRow>
        {PERSONAL_TILES.map((t) => (
          <Tile key={t.label}>
            <TileIcon>{t.art}</TileIcon>
            <TileLabel>{t.label}</TileLabel>
          </Tile>
        ))}
      </TileRow>
    </DialogSection>
    <DialogFooter>
      <OpenButton>פתח</OpenButton>
    </DialogFooter>
  </Dialog>
);

export default function App() {
  return (
    <Shell dir="rtl" lang="he">
      <GlobalStyle />
      <TitleBar>
        <AppLogo />
        <WindowTitle>אוצר החכמה</WindowTitle>
        <WindowButtons>
          <WindowButton aria-label="מזער">
            <Icon w={10} color="#222" sw={1}><path d="M0 5.500h10" /></Icon>
          </WindowButton>
          <WindowButton aria-label="שחזר">
            <Icon w={10} color="#222" sw={1}><path d="M.5 2.500h7v7h-7zM2.500 2.500v-2h7v7h-2" /></Icon>
          </WindowButton>
          <WindowButton aria-label="סגור חלון">
            <Icon w={10} color="#222" sw={1}><path d="M.5.500l9 9M9.500.500l-9 9" /></Icon>
          </WindowButton>
        </WindowButtons>
      </TitleBar>
      <Body>
        <Books />
        <Splitter>
          <Dots />
          <SplitHandle aria-label="הסתר רשימה">
            <Icon w={6} h={8} color="#eee" sw={1.4}><path d="M1.500 1l3 3-3 3" /></Icon>
          </SplitHandle>
          <Dots />
        </Splitter>
        <Workspace>
          <QuickBar>
            {QUICK.map((q) => (
              <Pill key={q}>{q}</Pill>
            ))}
            <RoundButton $size={16} aria-label="הוסף כפתור">
              <Plus size={8} color="#555" sw={1.8} />
            </RoundButton>
            <QuickEnd>
              <Avatar $size={24}>LW</Avatar>
              <button aria-label="דף הבית">
                <Icon w={20} h={19} color={ORANGE} sw={1.7}>
                  <path d="M1 9.500L10 1.500l9 8M3.500 8v10H8v-6.500h4V18h4.500V8" strokeLinejoin="round" />
                </Icon>
              </button>
              <MenuButton aria-label="תפריט">
                <svg width="6" height="20" viewBox="0 0 6 20" fill="#eee" aria-hidden="true">
                  <circle cx="3" cy="3" r="2.300" />
                  <circle cx="3" cy="10" r="2.300" />
                  <circle cx="3" cy="17" r="2.300" />
                </svg>
              </MenuButton>
            </QuickEnd>
          </QuickBar>
          <TabBar>
            <RoundButton $size={18} aria-label="כל הלשוניות">
              <Chevron />
            </RoundButton>
            <Tabs role="tablist">
              {TABS.map((t, i) => (
                <Tab key={i} role="tab" $active={i === TABS.length - 1}>{t}</Tab>
              ))}
            </Tabs>
            <TabPlus aria-label="לשונית חדשה">
              <Plus size={11} color="#777" sw={2.6} />
            </TabPlus>
            <TabEnd>
              <RoundButton $size={18} aria-label="אפשרויות">
                <Chevron />
              </RoundButton>
            </TabEnd>
          </TabBar>
          <Content>
            <Pages />
            <Viewer>
              <PageToolbar />
              <PageView>
                <ScrollTrack>
                  <ArrowHead />
                  <Thumb />
                  <ArrowHead $down />
                </ScrollTrack>
                <PageSheet>
                  <ScannedPage />
                </PageSheet>
              </PageView>
            </Viewer>
            <ToolRail>
              {TOOL_GROUPS.map((g, i) => (
                <ToolGroup key={i}>
                  {g.map((t) => (
                    <ToolButton key={t.name} aria-label={t.name}>{t.icon}</ToolButton>
                  ))}
                </ToolGroup>
              ))}
            </ToolRail>
          </Content>
        </Workspace>
      </Body>
      <StatusBar>
        <Copyright>המשתמש בתוכנה שלא נרכשה כדין עובר על איסור גזל ©</Copyright>
        <StatusCell />
      </StatusBar>

      <OpenListDialog />

      <Mark $x={991} $y={143} $w={50} $h={61} $round="50%" />
      <Mark $x={452} $y={270} $w={101} $h={111} $round="10px" />
      <StepBadge $x={1052} $y={161}>1</StepBadge>
      <StepBadge $x={559} $y={249}>2</StepBadge>
    </Shell>
  );
}
